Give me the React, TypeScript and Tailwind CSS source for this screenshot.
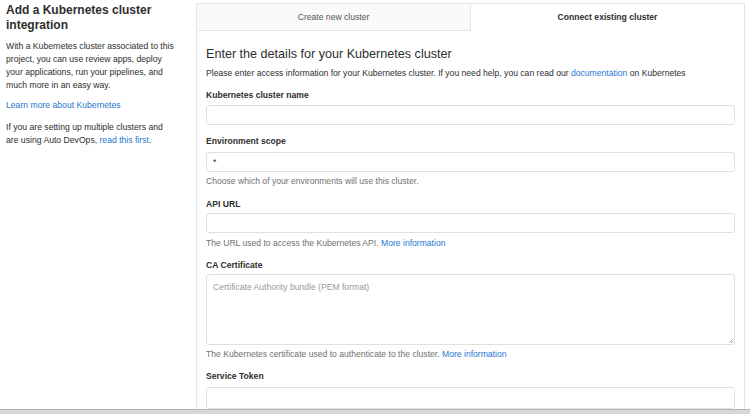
import React from "react";

export default function App() {
  const font = { fontFamily: '"Liberation Sans", Arial, sans-serif' };

  return (
    <main
      style={font}
      className="relative h-[414px] w-[750px] overflow-hidden bg-white text-[#2e2e2e]"
    >
      <div className="flex h-[409px]">
        {/* Left intro column */}
        <aside className="w-[196px] shrink-0 pl-[6px] pr-[20px] pt-[3px]">
          <h1 className="text-[12px] font-bold leading-[15px] text-[#2e2e2e]">
            Add a Kubernetes cluster integration
          </h1>
          <p className="mt-[7px] text-[8.65px] leading-[13px] text-[#2e2e2e]">
            With a Kubernetes cluster associated to this project, you can use
            review apps, deploy your applications, run your pipelines, and much
            more in an easy way.
          </p>
          <p className="mt-[7px] text-[8.65px] leading-[13px]">
            <a className="text-[#1f78d1]">Learn more about Kubernetes</a>
          </p>
          <p className="mt-[9px] text-[8.65px] leading-[13px]">
            If you are setting up multiple clusters and are using Auto DevOps,{" "}
            <a className="text-[#1f78d1]">read this first</a>.
          </p>
        </aside>

        {/* Right panel */}
        <section className="mt-[3px] flex w-[549px] flex-col border-x border-t border-[#e5e5e5]">
          <div className="flex h-[30px] text-[8.6px]">
            <div className="flex flex-1 items-center justify-center border-b border-[#e5e5e5] bg-[#fafafa] text-[#555]">
              Create new cluster
            </div>
            <div className="flex flex-1 items-center justify-center border-l border-[#e5e5e5] bg-white font-bold text-[#2e2e2e]">
              Connect existing cluster
            </div>
          </div>

          <div className="px-[9px] pt-[15px]">
            <h2 className="text-[12.6px] font-medium leading-[16px]">
              Enter the details for your Kubernetes cluster
            </h2>
            <p className="mt-[5px] text-[8.6px] leading-[12px]">
              Please enter access information for your Kubernetes cluster. If
              you need help, you can read our{" "}
              <a className="text-[#1f78d1]">documentation</a> on Kubernetes
            </p>

            <div className="mt-[10px] flex flex-col text-[8.6px]">
              <label className="font-bold leading-[12px]">
                Kubernetes cluster name
              </label>
              <div className="mt-[4px] h-[20px] w-[529px] rounded-[3px] border border-[#dfdfdf]" />

              <label className="mt-[10px] font-bold leading-[12px]">
                Environment scope
              </label>
              <div className="mt-[5px] flex h-[20px] w-[529px] items-center rounded-[3px] border border-[#dfdfdf] px-[6px]">
                *
              </div>
              <p className="mt-[3px] leading-[12px] text-[#707070]">
                Choose which of your environments will use this cluster.
              </p>

              <label className="mt-[11px] font-bold leading-[12px]">
                API URL
              </label>
              <div className="mt-[3px] h-[20px] w-[529px] rounded-[3px] border border-[#dfdfdf]" />
              <p className="mt-[4px] leading-[12px] text-[#707070]">
                The URL used to access the Kubernetes API.{" "}
                <a className="text-[#1f78d1]">More information</a>
              </p>

              <label className="mt-[10px] font-bold leading-[12px]">
                CA Certificate
              </label>
              <div className="relative mt-[3px] h-[71px] w-[529px] rounded-[3px] border border-[#dfdfdf] px-[6px] pt-[6px] text-[#9a9a9a]">
                Certificate Authority bundle (PEM format)
                <svg
                  className="absolute bottom-[1px] right-[1px]"
                  width="5"
                  height="5"
                  viewBox="0 0 5 5"
                >
                  <path d="M5 1 L1 5 M5 3 L3 5" stroke="#999" strokeWidth="0.7" />
                </svg>
              </div>
              <p className="mt-[3px] leading-[12px] text-[#707070]">
                The Kubernetes certificate used to authenticate to the cluster.{" "}
                <a className="text-[#1f78d1]">More information</a>
              </p>

              <label className="mt-[10px] font-bold leading-[12px]">
                Service Token
              </label>
              <div className="mt-[5px] h-[22px] w-[529px] rounded-[3px] border border-[#dfdfdf]" />
            </div>
          </div>
        </section>
      </div>

      {/* bottom edge of screen */}
      <div className="h-[5px] w-full border-t border-[#b5b5b5] bg-[#d8d8d8]" />
    </main>
  );
}
